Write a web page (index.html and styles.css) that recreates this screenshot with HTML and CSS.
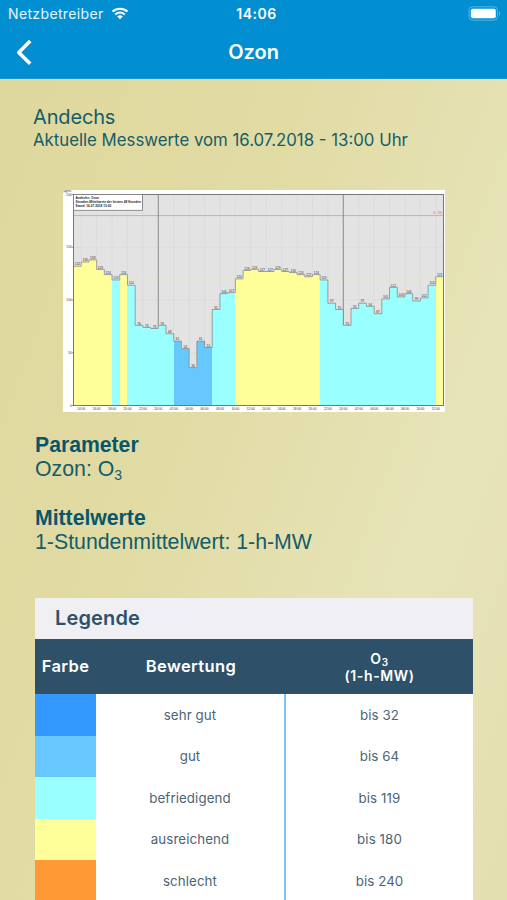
FILE: index.html
```html
<!DOCTYPE html>
<html lang="de">
<head>
  <meta charset="utf-8">
  <meta name="viewport" content="width=device-width, initial-scale=1.0">
  <title>Ozon</title>
  <link rel="stylesheet" href="styles.css">
</head>
<body>
  <header>
    <div class="statusbar">
      <div class="carrier">
        <span>Netzbetreiber</span>
        <svg width="18" height="13" viewBox="0 0 18 13">
          <path d="M1.5 4.6a11 11 0 0 1 15 0M4.2 7.4a7 7 0 0 1 9.6 0" fill="none" stroke="#fff" stroke-width="2"/>
          <path d="M9 12.2L6.2 9.5a4 4 0 0 1 5.6 0z" fill="#fff"/>
        </svg>
      </div>
      <span class="clock">14:06</span>
      <svg class="battery" width="34" height="15" viewBox="0 0 34 15">
        <rect x="1" y="0.8" width="28.5" height="13.4" rx="3.6" fill="none" stroke="#58b3e0" stroke-width="1"/>
        <rect x="2.8" y="2.8" width="25" height="9.4" rx="2" fill="#fff"/>
        <path d="M31 5.2a2.6 2.6 0 0 1 0 4.6z" fill="#58b3e0"/>
      </svg>
    </div>
    <div class="navbar">
      <svg class="back" width="18" height="28" viewBox="0 0 18 28">
        <path d="M15.2 3L3.8 14.4l11.4 11.4" fill="none" stroke="#fff" stroke-width="3.6" stroke-linejoin="round"/>
      </svg>
      <h1>Ozon</h1>
    </div>
  </header>

  <main>
    <div class="station">
      <h2>Andechs</h2>
      <p>Aktuelle Messwerte vom 16.07.2018 - 13:00 Uhr</p>
    </div>

    <svg id="chart" class="chart" width="382" height="222" viewBox="0 0 382 222"></svg>

    <div class="info">
      <h3>Parameter</h3>
      <p>Ozon: O<sub>3</sub></p>
    </div>
    <div class="info">
      <h3>Mittelwerte</h3>
      <p>1-Stundenmittelwert: 1-h-MW</p>
    </div>

    <div class="legend">
      <h4>Legende</h4>
      <table>
        <thead>
          <tr>
            <th class="color">Farbe</th>
            <th class="rating">Bewertung</th>
            <th class="limit">O<sub>3</sub><br>(1-h-MW)</th>
          </tr>
        </thead>
        <tbody>
          <tr><td class="very-good"></td><td class="name">sehr gut</td><td>bis 32</td></tr>
          <tr><td class="good"></td><td class="name">gut</td><td>bis 64</td></tr>
          <tr><td class="fair"></td><td class="name">befriedigend</td><td>bis 119</td></tr>
          <tr><td class="sufficient"></td><td class="name">ausreichend</td><td>bis 180</td></tr>
          <tr><td class="bad"></td><td class="name">schlecht</td><td>bis 240</td></tr>
        </tbody>
      </table>
    </div>
  </main>

  <script>
    // hourly values, starting at 14:00
    const values = [
      132, 136, 138, 129, 124, 119, 124, 114, 76, 74, 73, 76,
      68, 61, 54, 36, 61, 55, 91, 106, 107, 120, 128, 129,
      127, 127, 129, 127, 126, 124, 122, 124, 119, 97, 91, 76,
      92, 97, 94, 87, 101, 112, 103, 106, 99, 102, 114, 122
    ];
    const left = 10.5, right = 380.5, top_ = 4.5, bottom = 215.5;
    const step = (right - left) / values.length;
    const y = v => bottom - v * (bottom - top_) / 200;

    function color(v) {
      if (v <= 32) return '#3399ff';
      if (v <= 64) return '#66c8ff';
      if (v < 120) return '#99ffff';
      return '#ffff99';
    }

    function line(x1, y1, x2, y2, stroke, width) {
      return `<line x1="${x1}" y1="${y1}" x2="${x2}" y2="${y2}" stroke="${stroke}" stroke-width="${width}"/>`;
    }

    function drawChart() {
      let svg = `<rect width="382" height="222" fill="#fff"/>
        <rect x="${left}" y="${top_}" width="${right - left}" height="${bottom - top_}" fill="#e3e3e3"/>`;

      for (let i = 1; i < values.length; i += 2) {
        svg += line(left + i * step, top_, left + i * step, bottom, '#d6d6d6', 0.6);
      }
      [50, 100, 150].forEach(v => svg += line(left, y(v), right, y(v), '#d9d9d9', 0.6));
      svg += line(left, y(120), right, y(120), '#e9e6bd', 0.8);
      svg += line(left, y(180), right, y(180), '#f7a468', 1);
      [11, 35].forEach(i => svg += line(left + i * step, top_, left + i * step, bottom, '#777', 0.8));

      let outline = '';
      values.forEach((v, i) => {
        const x = left + i * step;
        svg += `<rect class="bar" x="${x}" y="${y(v)}" width="${step}" height="${bottom - y(v)}" fill="${color(v)}"/>`;
        outline += `${i ? 'L' : 'M'}${x} ${y(v)}H${x + step}`;
      });
      svg += `<path d="${outline}" fill="none" stroke="#8a8a8a" stroke-width="0.8"/>`;
      values.forEach((v, i) => {
        svg += `<text class="tick" x="${left + (i + 0.5) * step}" y="${y(v) - 0.8}" text-anchor="middle">${v}</text>`;
      });

      svg += `<rect x="${left}" y="${top_}" width="${right - left}" height="${bottom - top_}" fill="none" stroke="#777" stroke-width="1"/>`;
      [0, 50, 100, 150, 200].forEach(v => {
        svg += line(left - 1.5, y(v), left, y(v), '#555', 0.6);
        svg += `<text class="tick" x="${left - 1.8}" y="${y(v) + 1.2}" text-anchor="end">${v}</text>`;
      });
      for (let i = 1; i < values.length; i += 2) {
        const hour = (13 + i - 1) % 24 + 1;
        svg += `<text class="tick" x="${left + i * step}" y="219.6" text-anchor="middle">${String(hour).padStart(2, '0')}:00</text>`;
      }
      svg += `<text class="tick" x="0.5" y="2.4">µg/m³</text>
        <text class="tick alarm" x="370" y="24.3">G: 180</text>
        <rect x="${left}" y="${top_}" width="69" height="15.8" fill="#fff" stroke="#777" stroke-width="0.8"/>
        <text class="caption" x="12.5" y="9.4">Andechs: Ozon</text>
        <text class="caption" x="12.5" y="13.1">Stunden-Mittelwerte der letzten 48 Stunden</text>
        <text class="caption" x="12.5" y="16.8">Stand: 16.07.2018 13:00</text>`;
      document.getElementById('chart').innerHTML = svg;
    }

    drawChart();
  </script>
</body>
</html>
```

FILE: styles.css
```css
body {
  margin: 0;
  height: 900px;
  overflow: hidden;
  font-family: Inter, 'Liberation Sans', sans-serif;
  color: #145c68;
  background: linear-gradient(110deg, #dfd89d 0%, #e1dba4 40%, #e7e4b9 75%, #e4dfb0 100%);
}

h1, h2, h3, h4, p {
  margin: 0;
}

header {
  height: 79px;
  box-sizing: border-box;
  background: #028fd1;
  border-bottom: 1px solid #1b97cb;
  color: #fff;
}

.statusbar {
  display: grid;
  grid-template-columns: 1fr auto 1fr;
  align-items: center;
  height: 27px;
  padding: 0 5px 0 8px;
  font-size: 14px;
}

.carrier {
  display: flex;
  align-items: center;
  gap: 7px;
  letter-spacing: 0.36px;
  color: #e6f6ff;
}

.clock {
  font-size: 14px;
  font-weight: 600;
  letter-spacing: 0.5px;
  padding-left: 3px;
}

.battery {
  justify-self: end;
}

.navbar {
  display: grid;
  grid-template-columns: 60px 1fr 60px;
  align-items: center;
  height: 50px;
}

.back {
  margin-left: 15px;
}

h1 {
  font-size: 20px;
  font-weight: 600;
  text-align: center;
}

.station {
  padding: 26px 0 0 33px;
}

h2 {
  font-size: 20px;
  font-weight: 400;
  line-height: 24px;
  letter-spacing: -0.15px;
}

.station p {
  font-size: 16.8px;
  line-height: 23px;
}

.chart {
  display: block;
  margin: 38px 0 21px 63px;
}

.bar {
  shape-rendering: crispEdges;
}

.tick {
  font: 3.2px 'Liberation Sans', sans-serif;
  fill: #333;
}

.alarm {
  fill: #e8803c;
}

.caption {
  font: bold 3.2px 'Liberation Sans', sans-serif;
  fill: #222;
}

.info {
  height: 73px;
  padding-left: 35px;
  font-family: 'Liberation Sans', Arial, sans-serif;
  font-size: 21.3px;
  line-height: 24px;
}

h3 {
  font-size: 21.2px;
  line-height: 24px;
  color: #08566a;
}

.info sub {
  font-size: 14px;
  line-height: 0;
  vertical-align: -4px;
}

.legend {
  width: 438px;
  margin: 19px 0 0 35px;
  background: #fff;
  color: #2e5169;
}

h4 {
  height: 41px;
  padding-left: 20px;
  background: #efeff4;
  font-size: 20px;
  font-weight: 600;
  line-height: 41px;
  letter-spacing: 0.15px;
}

table {
  width: 438px;
  table-layout: fixed;
  border-collapse: separate;
  border-spacing: 0;
}

th {
  height: 55px;
  padding: 0 0 2px;
  box-sizing: border-box;
  background: #2e5169;
  color: #fff;
  font-size: 16.5px;
  font-weight: 600;
  letter-spacing: 0.4px;
}

.color {
  width: 61px;
}

.rating {
  width: 190px;
}

.limit {
  padding: 0;
  font-size: 14px;
  line-height: 17px;
  letter-spacing: 0.6px;
}

.limit sub {
  font-size: 10px;
  line-height: 0;
  vertical-align: -2px;
}

td {
  height: 41.5px;
  padding: 0;
  font-size: 13.3px;
  letter-spacing: 0.1px;
  text-align: center;
  color: #4c6577;
}

.name {
  border-right: 2px solid #80bfff;
}

.very-good {
  background: #3399ff;
}

.good {
  background: #66c8ff;
}

.fair {
  background: #99ffff;
}

.sufficient {
  background: #ffff99;
}

.bad {
  background: #ff9933;
}
```
